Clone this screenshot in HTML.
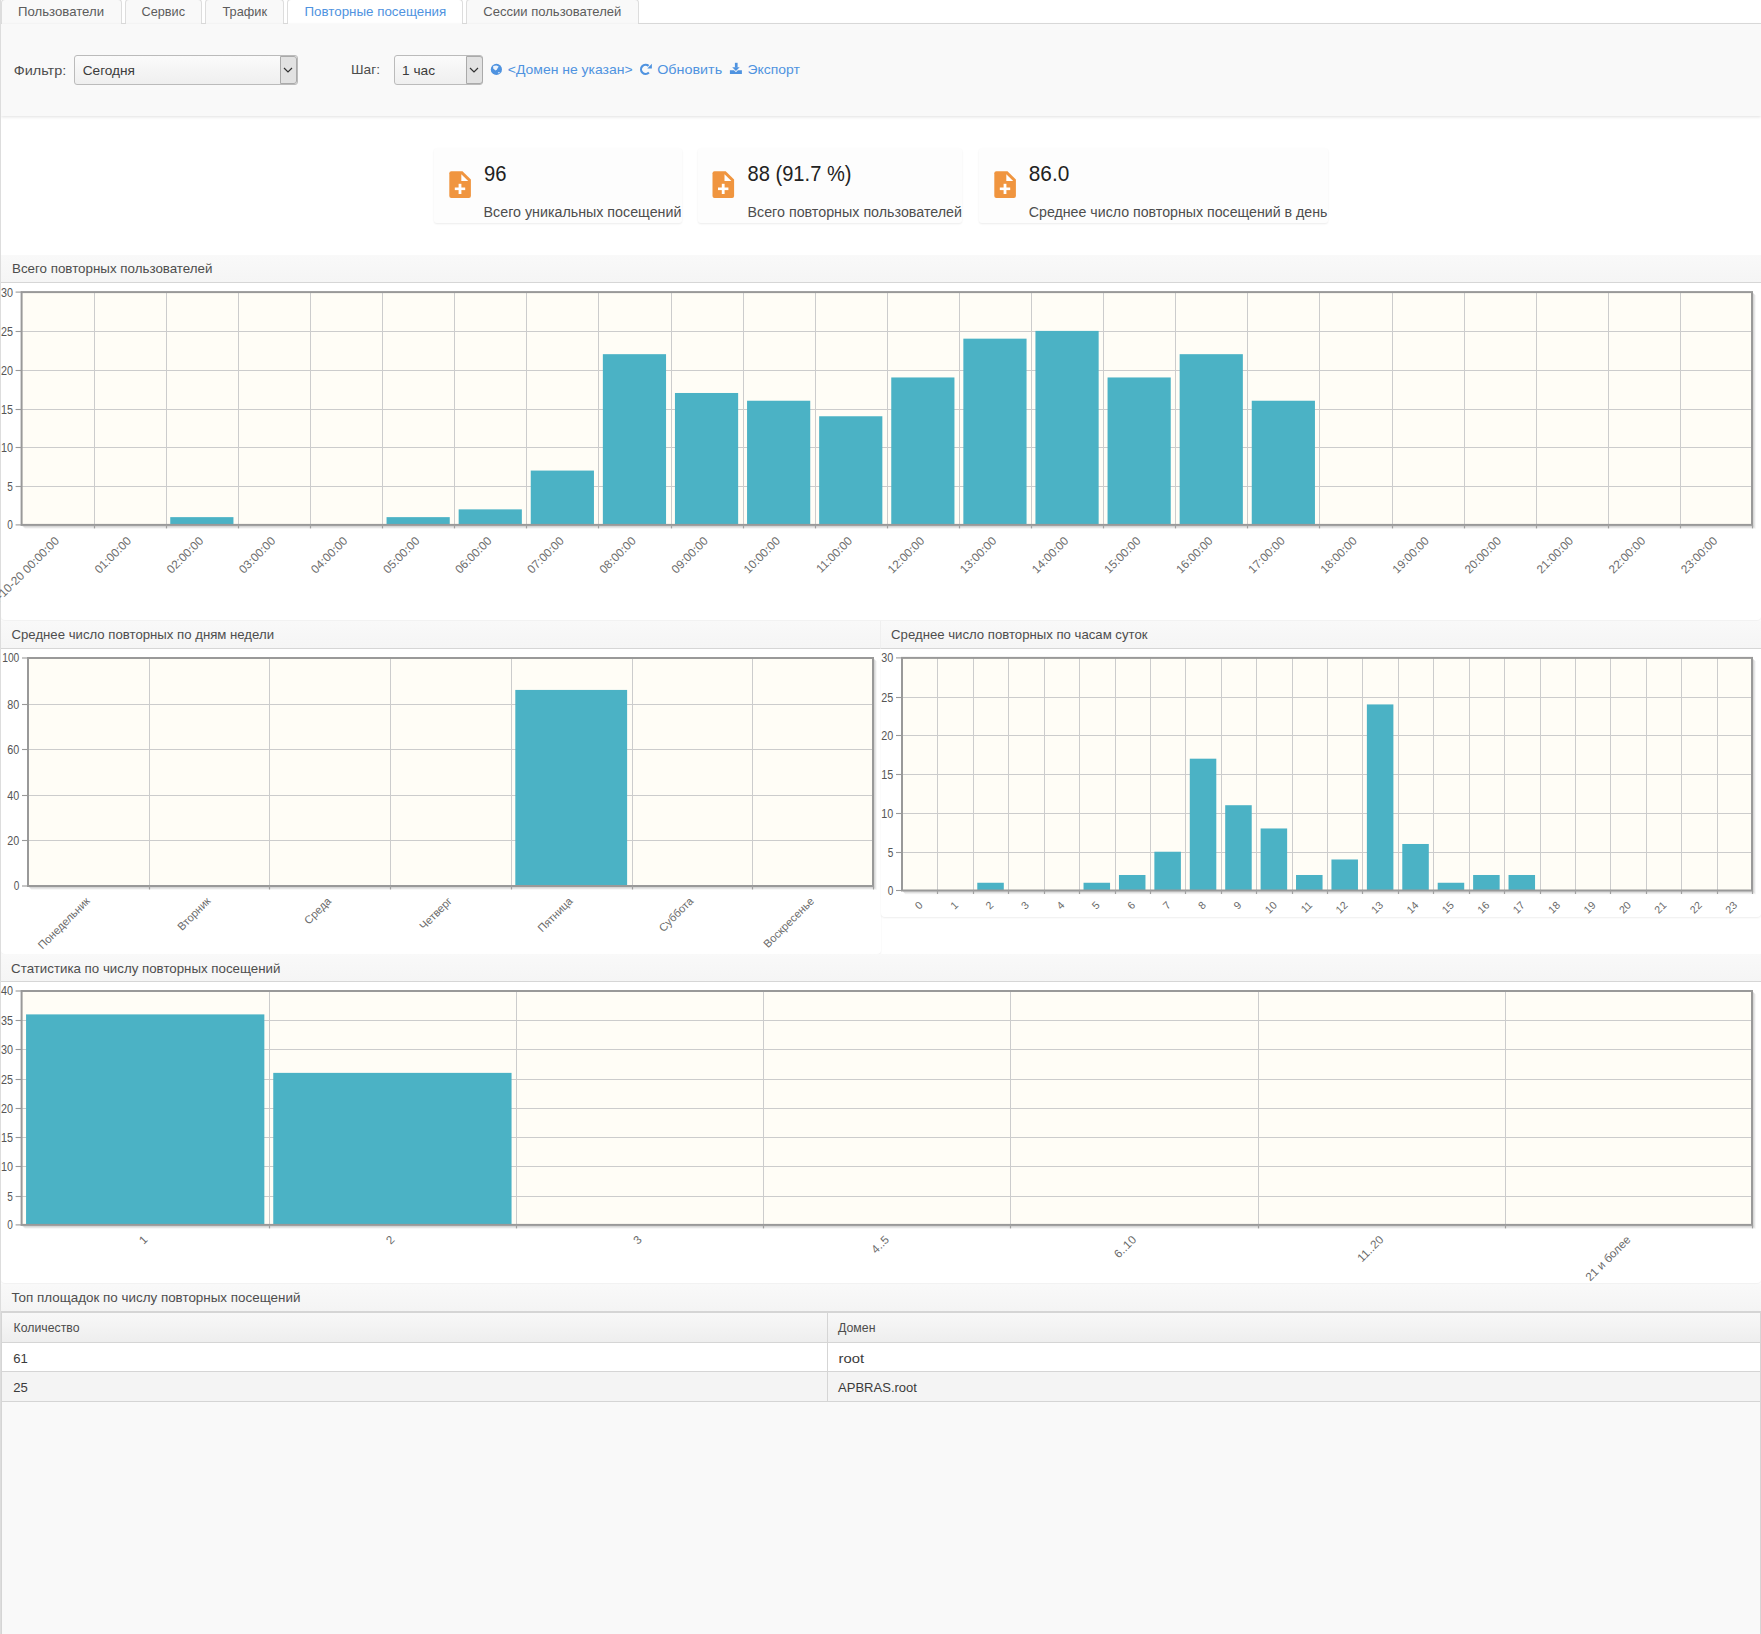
<!DOCTYPE html>
<html><head><meta charset="utf-8">
<style>
html,body{margin:0;padding:0;}
body{width:1761px;height:1634px;position:relative;overflow:hidden;background:#fff;font-family:"Liberation Sans", sans-serif;}
.a{position:absolute;box-sizing:border-box;}
</style></head><body>
<!-- page bg regions -->
<div class="a" style="left:0;top:0;width:1761px;height:23px;background:#fff"></div>
<div class="a" style="left:0;top:23px;width:1761px;height:1px;background:#dddddd"></div>
<!-- tabs -->
<div class="a" style="left:1px;top:-1px;width:121px;height:25px;background:#f9f9f9;border:1px solid #dddddd;border-radius:4px 4px 0 0;border-bottom:0"></div>
<div class="a" style="left:124.5px;top:-1px;width:77px;height:25px;background:#f9f9f9;border:1px solid #dddddd;border-radius:4px 4px 0 0;border-bottom:0"></div>
<div class="a" style="left:205px;top:-1px;width:79px;height:25px;background:#f9f9f9;border:1px solid #dddddd;border-radius:4px 4px 0 0;border-bottom:0"></div>
<div class="a" style="left:287px;top:-1px;width:176px;height:25px;background:#ffffff;border:1px solid #dddddd;border-radius:4px 4px 0 0;border-bottom:0"></div>
<div class="a" style="left:466px;top:-1px;width:173px;height:25px;background:#f9f9f9;border:1px solid #dddddd;border-radius:4px 4px 0 0;border-bottom:0"></div>
<!-- toolbar -->
<div class="a" style="left:1px;top:24px;width:1760px;height:92px;background:#f9f9f9;box-shadow:0 1px 3px rgba(0,0,0,.12)"></div>
<!-- selects -->
<div class="a" style="left:74px;top:55px;width:224px;height:30px;border:1px solid #bbbbbb;border-radius:3px;background:linear-gradient(#fbfbfb,#efefef)"></div>
<div class="a" style="left:280px;top:56px;width:17px;height:28px;border:1px solid #aaaaaa;border-radius:0 3px 3px 0;background:#e2e2e2"></div>
<div class="a" style="left:394px;top:55px;width:89px;height:30px;border:1px solid #bbbbbb;border-radius:3px;background:linear-gradient(#fbfbfb,#efefef)"></div>
<div class="a" style="left:466px;top:56px;width:17px;height:28px;border:1px solid #aaaaaa;border-radius:0 3px 3px 0;background:#e2e2e2"></div>
<!-- cards -->
<div class="a" style="left:434px;top:148px;width:248px;height:75px;background:#fdfdfd;border-radius:3px;box-shadow:0 1px 2px rgba(0,0,0,.08)"></div>
<div class="a" style="left:698px;top:148px;width:264px;height:75px;background:#fdfdfd;border-radius:3px;box-shadow:0 1px 2px rgba(0,0,0,.08)"></div>
<div class="a" style="left:979px;top:148px;width:349px;height:75px;background:#fdfdfd;border-radius:3px;box-shadow:0 1px 2px rgba(0,0,0,.08)"></div>
<!-- panels -->
<div class="a" style="left:1px;top:283px;width:1760px;height:337px;background:#fff;border-radius:0 0 4px 4px;box-shadow:0 1px 2px rgba(0,0,0,.07)"></div>
<div class="a" style="left:1px;top:649px;width:880px;height:305px;background:#fff;border-radius:0 0 4px 4px;box-shadow:0 1px 2px rgba(0,0,0,.07)"></div>
<div class="a" style="left:881px;top:649px;width:880px;height:268px;background:#fff;border-radius:0 0 4px 4px;box-shadow:0 1px 2px rgba(0,0,0,.07)"></div>
<div class="a" style="left:1px;top:982px;width:1760px;height:301px;background:#fff;border-radius:0 0 4px 4px;box-shadow:0 1px 2px rgba(0,0,0,.07)"></div>
<!-- headers -->
<div class="a" style="left:1px;top:255px;width:1760px;height:28px;background:linear-gradient(#f9f9f9,#f5f5f5);border-bottom:1px solid #d6d6d6"></div>
<div class="a" style="left:1px;top:621px;width:879px;height:28px;background:linear-gradient(#f9f9f9,#f5f5f5);border-bottom:1px solid #d6d6d6"></div>
<div class="a" style="left:880px;top:621px;width:881px;height:28px;background:linear-gradient(#f9f9f9,#f5f5f5);border-bottom:1px solid #d6d6d6;border-left:1px solid #efefef"></div>
<div class="a" style="left:1px;top:954px;width:1760px;height:28px;background:linear-gradient(#f9f9f9,#f5f5f5);border-bottom:1px solid #d6d6d6"></div>
<div class="a" style="left:1px;top:1284px;width:1760px;height:29px;background:linear-gradient(#f9f9f9,#f4f4f4);border-bottom:2px solid #d5d5d5"></div>
<!-- table -->
<div class="a" style="left:1px;top:1313px;width:1760px;height:321px;background:#f9f9f9;border-left:1px solid #d5d5d5;border-right:1px solid #d5d5d5"></div>
<div class="a" style="left:2px;top:1313px;width:1758px;height:30px;background:linear-gradient(#f8f8f8,#eeeeee);border-bottom:1px solid #d5d5d5"></div>
<div class="a" style="left:2px;top:1343px;width:1758px;height:29px;background:#ffffff;border-bottom:1px solid #d5d5d5"></div>
<div class="a" style="left:2px;top:1372px;width:1758px;height:30px;background:#f4f4f4;border-bottom:1px solid #d5d5d5"></div>
<div class="a" style="left:827px;top:1313px;width:1px;height:89px;background:#d5d5d5"></div>
<!-- page left border -->
<div class="a" style="left:0;top:0;width:1px;height:1634px;background:#dddddd"></div>
<!-- icons -->
<svg class="a" style="left:0;top:0" width="1761" height="1634" font-family='"Liberation Sans", sans-serif'>
<polyline points="284,68 288,72 292,68" fill="none" stroke="#333" stroke-width="1.2"/>
<polyline points="470,68 474,72 478,68" fill="none" stroke="#333" stroke-width="1.2"/>
<path d="M451.3,171.3 H462.5 L470.90000000000003,179.4 V196.10000000000002 Q470.90000000000003,198.10000000000002 468.90000000000003,198.10000000000002 H451.3 Q449.3,198.10000000000002 449.3,196.10000000000002 V173.3 Q449.3,171.3 451.3,171.3 Z" fill="#f0953f"/><path d="M461.3,174.20000000000002 V180.9 H468.2 Z" fill="#ffffff"/><rect x="458.6" y="183.8" width="2.8" height="10.2" fill="#fff"/><rect x="454.8" y="187.5" width="10.4" height="2.6" fill="#fff"/>
<path d="M714.5,171.3 H725.7 L734.1,179.4 V196.10000000000002 Q734.1,198.10000000000002 732.1,198.10000000000002 H714.5 Q712.5,198.10000000000002 712.5,196.10000000000002 V173.3 Q712.5,171.3 714.5,171.3 Z" fill="#f0953f"/><path d="M724.5,174.20000000000002 V180.9 H731.4 Z" fill="#ffffff"/><rect x="721.8" y="183.8" width="2.8" height="10.2" fill="#fff"/><rect x="718.0" y="187.5" width="10.4" height="2.6" fill="#fff"/>
<path d="M996.3,171.3 H1007.5 L1015.9,179.4 V196.10000000000002 Q1015.9,198.10000000000002 1013.9,198.10000000000002 H996.3 Q994.3,198.10000000000002 994.3,196.10000000000002 V173.3 Q994.3,171.3 996.3,171.3 Z" fill="#f0953f"/><path d="M1006.3,174.20000000000002 V180.9 H1013.1999999999999 Z" fill="#ffffff"/><rect x="1003.5999999999999" y="183.8" width="2.8" height="10.2" fill="#fff"/><rect x="999.8" y="187.5" width="10.4" height="2.6" fill="#fff"/>
<circle cx="496.4" cy="69.4" r="5.6" fill="#4f93e0"/><path d="M493.2,66.1 L496.4,65.4 L498.7,66.4 L497,69.3 L495.5,70.6 L493.2,68.4 Z" fill="#fff" opacity="0.9"/><ellipse cx="498.9" cy="72.7" rx="1" ry="0.6" fill="#fff" opacity="0.75"/>
<path d="M648.6,65.9 A4.57,4.57 0 1 0 648.9,72.6" fill="none" stroke="#4f93e0" stroke-width="2.2"/><path d="M647.3,68.4 L651.9,68.4 L651.9,63.8 Z" fill="#4f93e0"/>
<rect x="734.9" y="62.8" width="2.7" height="4.8" fill="#4f93e0"/><path d="M732.2,67.2 L739.7,67.2 L735.95,70.9 Z" fill="#4f93e0"/><path d="M729.9,70.2 H734 L735.95,72.2 L737.9,70.2 H741.9 V74 H729.9 Z" fill="#4f93e0"/>
<rect x="21.6" y="292.1" width="1730.4" height="232.79999999999995" fill="#fffdf6"/>
<line x1="21.6" y1="486.50" x2="1752" y2="486.50" stroke="#cccccc" stroke-width="1"/>
<line x1="21.6" y1="447.50" x2="1752" y2="447.50" stroke="#cccccc" stroke-width="1"/>
<line x1="21.6" y1="409.50" x2="1752" y2="409.50" stroke="#cccccc" stroke-width="1"/>
<line x1="21.6" y1="370.50" x2="1752" y2="370.50" stroke="#cccccc" stroke-width="1"/>
<line x1="21.6" y1="331.50" x2="1752" y2="331.50" stroke="#cccccc" stroke-width="1"/>
<line x1="94.50" y1="292.1" x2="94.50" y2="524.9" stroke="#cccccc" stroke-width="1"/>
<line x1="166.50" y1="292.1" x2="166.50" y2="524.9" stroke="#cccccc" stroke-width="1"/>
<line x1="238.50" y1="292.1" x2="238.50" y2="524.9" stroke="#cccccc" stroke-width="1"/>
<line x1="310.50" y1="292.1" x2="310.50" y2="524.9" stroke="#cccccc" stroke-width="1"/>
<line x1="382.50" y1="292.1" x2="382.50" y2="524.9" stroke="#cccccc" stroke-width="1"/>
<line x1="454.50" y1="292.1" x2="454.50" y2="524.9" stroke="#cccccc" stroke-width="1"/>
<line x1="526.50" y1="292.1" x2="526.50" y2="524.9" stroke="#cccccc" stroke-width="1"/>
<line x1="598.50" y1="292.1" x2="598.50" y2="524.9" stroke="#cccccc" stroke-width="1"/>
<line x1="671.50" y1="292.1" x2="671.50" y2="524.9" stroke="#cccccc" stroke-width="1"/>
<line x1="743.50" y1="292.1" x2="743.50" y2="524.9" stroke="#cccccc" stroke-width="1"/>
<line x1="815.50" y1="292.1" x2="815.50" y2="524.9" stroke="#cccccc" stroke-width="1"/>
<line x1="887.50" y1="292.1" x2="887.50" y2="524.9" stroke="#cccccc" stroke-width="1"/>
<line x1="959.50" y1="292.1" x2="959.50" y2="524.9" stroke="#cccccc" stroke-width="1"/>
<line x1="1031.50" y1="292.1" x2="1031.50" y2="524.9" stroke="#cccccc" stroke-width="1"/>
<line x1="1103.50" y1="292.1" x2="1103.50" y2="524.9" stroke="#cccccc" stroke-width="1"/>
<line x1="1175.50" y1="292.1" x2="1175.50" y2="524.9" stroke="#cccccc" stroke-width="1"/>
<line x1="1247.50" y1="292.1" x2="1247.50" y2="524.9" stroke="#cccccc" stroke-width="1"/>
<line x1="1319.50" y1="292.1" x2="1319.50" y2="524.9" stroke="#cccccc" stroke-width="1"/>
<line x1="1392.50" y1="292.1" x2="1392.50" y2="524.9" stroke="#cccccc" stroke-width="1"/>
<line x1="1464.50" y1="292.1" x2="1464.50" y2="524.9" stroke="#cccccc" stroke-width="1"/>
<line x1="1536.50" y1="292.1" x2="1536.50" y2="524.9" stroke="#cccccc" stroke-width="1"/>
<line x1="1608.50" y1="292.1" x2="1608.50" y2="524.9" stroke="#cccccc" stroke-width="1"/>
<line x1="1680.50" y1="292.1" x2="1680.50" y2="524.9" stroke="#cccccc" stroke-width="1"/>
<rect x="170.25" y="517.14" width="63.20" height="7.76" fill="#4bb2c5"/>
<rect x="386.55" y="517.14" width="63.20" height="7.76" fill="#4bb2c5"/>
<rect x="458.65" y="509.38" width="63.20" height="15.52" fill="#4bb2c5"/>
<rect x="530.75" y="470.58" width="63.20" height="54.32" fill="#4bb2c5"/>
<rect x="602.85" y="354.18" width="63.20" height="170.72" fill="#4bb2c5"/>
<rect x="674.95" y="392.98" width="63.20" height="131.92" fill="#4bb2c5"/>
<rect x="747.05" y="400.74" width="63.20" height="124.16" fill="#4bb2c5"/>
<rect x="819.15" y="416.26" width="63.20" height="108.64" fill="#4bb2c5"/>
<rect x="891.25" y="377.46" width="63.20" height="147.44" fill="#4bb2c5"/>
<rect x="963.35" y="338.66" width="63.20" height="186.24" fill="#4bb2c5"/>
<rect x="1035.45" y="330.90" width="63.20" height="194.00" fill="#4bb2c5"/>
<rect x="1107.55" y="377.46" width="63.20" height="147.44" fill="#4bb2c5"/>
<rect x="1179.65" y="354.18" width="63.20" height="170.72" fill="#4bb2c5"/>
<rect x="1251.75" y="400.74" width="63.20" height="124.16" fill="#4bb2c5"/>
<polyline points="22.6,525.9 1753,525.9 1753,293.1" fill="none" stroke="rgba(0,0,0,0.13)" stroke-width="1.5"/>
<polyline points="23.6,526.9 1754,526.9 1754,294.1" fill="none" stroke="rgba(0,0,0,0.09)" stroke-width="1.5"/>
<polyline points="24.6,527.9 1755,527.9 1755,295.1" fill="none" stroke="rgba(0,0,0,0.045)" stroke-width="1.5"/>
<rect x="21.6" y="292.1" width="1730.4" height="232.79999999999995" fill="none" stroke="#999999" stroke-width="2"/>
<line x1="15.600000000000001" y1="524.90" x2="21.6" y2="524.90" stroke="#999999" stroke-width="1.1"/>
<text x="12.90" y="529.30" font-size="12" fill="#555" text-anchor="end" textLength="5.6" lengthAdjust="spacingAndGlyphs">0</text>
<line x1="15.600000000000001" y1="486.50" x2="21.6" y2="486.50" stroke="#999999" stroke-width="1.1"/>
<text x="12.90" y="490.90" font-size="12" fill="#555" text-anchor="end" textLength="5.6" lengthAdjust="spacingAndGlyphs">5</text>
<line x1="15.600000000000001" y1="447.50" x2="21.6" y2="447.50" stroke="#999999" stroke-width="1.1"/>
<text x="12.90" y="451.90" font-size="12" fill="#555" text-anchor="end" textLength="12.0" lengthAdjust="spacingAndGlyphs">10</text>
<line x1="15.600000000000001" y1="409.50" x2="21.6" y2="409.50" stroke="#999999" stroke-width="1.1"/>
<text x="12.90" y="413.90" font-size="12" fill="#555" text-anchor="end" textLength="12.0" lengthAdjust="spacingAndGlyphs">15</text>
<line x1="15.600000000000001" y1="370.50" x2="21.6" y2="370.50" stroke="#999999" stroke-width="1.1"/>
<text x="12.90" y="374.90" font-size="12" fill="#555" text-anchor="end" textLength="12.0" lengthAdjust="spacingAndGlyphs">20</text>
<line x1="15.600000000000001" y1="331.50" x2="21.6" y2="331.50" stroke="#999999" stroke-width="1.1"/>
<text x="12.90" y="335.90" font-size="12" fill="#555" text-anchor="end" textLength="12.0" lengthAdjust="spacingAndGlyphs">25</text>
<line x1="15.600000000000001" y1="292.10" x2="21.6" y2="292.10" stroke="#999999" stroke-width="1.1"/>
<text x="12.90" y="296.50" font-size="12" fill="#555" text-anchor="end" textLength="12.0" lengthAdjust="spacingAndGlyphs">30</text>
<line x1="94.50" y1="524.9" x2="94.50" y2="528.4" stroke="#a0a0a0" stroke-width="1.2"/>
<line x1="166.50" y1="524.9" x2="166.50" y2="528.4" stroke="#a0a0a0" stroke-width="1.2"/>
<line x1="238.50" y1="524.9" x2="238.50" y2="528.4" stroke="#a0a0a0" stroke-width="1.2"/>
<line x1="310.50" y1="524.9" x2="310.50" y2="528.4" stroke="#a0a0a0" stroke-width="1.2"/>
<line x1="382.50" y1="524.9" x2="382.50" y2="528.4" stroke="#a0a0a0" stroke-width="1.2"/>
<line x1="454.50" y1="524.9" x2="454.50" y2="528.4" stroke="#a0a0a0" stroke-width="1.2"/>
<line x1="526.50" y1="524.9" x2="526.50" y2="528.4" stroke="#a0a0a0" stroke-width="1.2"/>
<line x1="598.50" y1="524.9" x2="598.50" y2="528.4" stroke="#a0a0a0" stroke-width="1.2"/>
<line x1="671.50" y1="524.9" x2="671.50" y2="528.4" stroke="#a0a0a0" stroke-width="1.2"/>
<line x1="743.50" y1="524.9" x2="743.50" y2="528.4" stroke="#a0a0a0" stroke-width="1.2"/>
<line x1="815.50" y1="524.9" x2="815.50" y2="528.4" stroke="#a0a0a0" stroke-width="1.2"/>
<line x1="887.50" y1="524.9" x2="887.50" y2="528.4" stroke="#a0a0a0" stroke-width="1.2"/>
<line x1="959.50" y1="524.9" x2="959.50" y2="528.4" stroke="#a0a0a0" stroke-width="1.2"/>
<line x1="1031.50" y1="524.9" x2="1031.50" y2="528.4" stroke="#a0a0a0" stroke-width="1.2"/>
<line x1="1103.50" y1="524.9" x2="1103.50" y2="528.4" stroke="#a0a0a0" stroke-width="1.2"/>
<line x1="1175.50" y1="524.9" x2="1175.50" y2="528.4" stroke="#a0a0a0" stroke-width="1.2"/>
<line x1="1247.50" y1="524.9" x2="1247.50" y2="528.4" stroke="#a0a0a0" stroke-width="1.2"/>
<line x1="1319.50" y1="524.9" x2="1319.50" y2="528.4" stroke="#a0a0a0" stroke-width="1.2"/>
<line x1="1392.50" y1="524.9" x2="1392.50" y2="528.4" stroke="#a0a0a0" stroke-width="1.2"/>
<line x1="1464.50" y1="524.9" x2="1464.50" y2="528.4" stroke="#a0a0a0" stroke-width="1.2"/>
<line x1="1536.50" y1="524.9" x2="1536.50" y2="528.4" stroke="#a0a0a0" stroke-width="1.2"/>
<line x1="1608.50" y1="524.9" x2="1608.50" y2="528.4" stroke="#a0a0a0" stroke-width="1.2"/>
<line x1="1680.50" y1="524.9" x2="1680.50" y2="528.4" stroke="#a0a0a0" stroke-width="1.2"/>
<line x1="1752.50" y1="524.9" x2="1752.50" y2="528.4" stroke="#a0a0a0" stroke-width="1.2"/>
<text transform="translate(59.85,541.70) rotate(-45)" font-size="11.8" fill="#6a6a6a" text-anchor="end">2014-10-20 00:00:00</text>
<text transform="translate(131.95,541.70) rotate(-45)" font-size="11.8" fill="#6a6a6a" text-anchor="end">01:00:00</text>
<text transform="translate(204.05,541.70) rotate(-45)" font-size="11.8" fill="#6a6a6a" text-anchor="end">02:00:00</text>
<text transform="translate(276.15,541.70) rotate(-45)" font-size="11.8" fill="#6a6a6a" text-anchor="end">03:00:00</text>
<text transform="translate(348.25,541.70) rotate(-45)" font-size="11.8" fill="#6a6a6a" text-anchor="end">04:00:00</text>
<text transform="translate(420.35,541.70) rotate(-45)" font-size="11.8" fill="#6a6a6a" text-anchor="end">05:00:00</text>
<text transform="translate(492.45,541.70) rotate(-45)" font-size="11.8" fill="#6a6a6a" text-anchor="end">06:00:00</text>
<text transform="translate(564.55,541.70) rotate(-45)" font-size="11.8" fill="#6a6a6a" text-anchor="end">07:00:00</text>
<text transform="translate(636.65,541.70) rotate(-45)" font-size="11.8" fill="#6a6a6a" text-anchor="end">08:00:00</text>
<text transform="translate(708.75,541.70) rotate(-45)" font-size="11.8" fill="#6a6a6a" text-anchor="end">09:00:00</text>
<text transform="translate(780.85,541.70) rotate(-45)" font-size="11.8" fill="#6a6a6a" text-anchor="end">10:00:00</text>
<text transform="translate(852.95,541.70) rotate(-45)" font-size="11.8" fill="#6a6a6a" text-anchor="end">11:00:00</text>
<text transform="translate(925.05,541.70) rotate(-45)" font-size="11.8" fill="#6a6a6a" text-anchor="end">12:00:00</text>
<text transform="translate(997.15,541.70) rotate(-45)" font-size="11.8" fill="#6a6a6a" text-anchor="end">13:00:00</text>
<text transform="translate(1069.25,541.70) rotate(-45)" font-size="11.8" fill="#6a6a6a" text-anchor="end">14:00:00</text>
<text transform="translate(1141.35,541.70) rotate(-45)" font-size="11.8" fill="#6a6a6a" text-anchor="end">15:00:00</text>
<text transform="translate(1213.45,541.70) rotate(-45)" font-size="11.8" fill="#6a6a6a" text-anchor="end">16:00:00</text>
<text transform="translate(1285.55,541.70) rotate(-45)" font-size="11.8" fill="#6a6a6a" text-anchor="end">17:00:00</text>
<text transform="translate(1357.65,541.70) rotate(-45)" font-size="11.8" fill="#6a6a6a" text-anchor="end">18:00:00</text>
<text transform="translate(1429.75,541.70) rotate(-45)" font-size="11.8" fill="#6a6a6a" text-anchor="end">19:00:00</text>
<text transform="translate(1501.85,541.70) rotate(-45)" font-size="11.8" fill="#6a6a6a" text-anchor="end">20:00:00</text>
<text transform="translate(1573.95,541.70) rotate(-45)" font-size="11.8" fill="#6a6a6a" text-anchor="end">21:00:00</text>
<text transform="translate(1646.05,541.70) rotate(-45)" font-size="11.8" fill="#6a6a6a" text-anchor="end">22:00:00</text>
<text transform="translate(1718.15,541.70) rotate(-45)" font-size="11.8" fill="#6a6a6a" text-anchor="end">23:00:00</text>
<rect x="28" y="658" width="845" height="228" fill="#fffdf6"/>
<line x1="28" y1="840.50" x2="873" y2="840.50" stroke="#cccccc" stroke-width="1"/>
<line x1="28" y1="795.50" x2="873" y2="795.50" stroke="#cccccc" stroke-width="1"/>
<line x1="28" y1="749.50" x2="873" y2="749.50" stroke="#cccccc" stroke-width="1"/>
<line x1="28" y1="704.50" x2="873" y2="704.50" stroke="#cccccc" stroke-width="1"/>
<line x1="149.50" y1="658" x2="149.50" y2="886" stroke="#cccccc" stroke-width="1"/>
<line x1="269.50" y1="658" x2="269.50" y2="886" stroke="#cccccc" stroke-width="1"/>
<line x1="390.50" y1="658" x2="390.50" y2="886" stroke="#cccccc" stroke-width="1"/>
<line x1="511.50" y1="658" x2="511.50" y2="886" stroke="#cccccc" stroke-width="1"/>
<line x1="632.50" y1="658" x2="632.50" y2="886" stroke="#cccccc" stroke-width="1"/>
<line x1="752.50" y1="658" x2="752.50" y2="886" stroke="#cccccc" stroke-width="1"/>
<rect x="515.31" y="689.92" width="111.81" height="196.08" fill="#4bb2c5"/>
<polyline points="29,887 874,887 874,659" fill="none" stroke="rgba(0,0,0,0.13)" stroke-width="1.5"/>
<polyline points="30,888 875,888 875,660" fill="none" stroke="rgba(0,0,0,0.09)" stroke-width="1.5"/>
<polyline points="31,889 876,889 876,661" fill="none" stroke="rgba(0,0,0,0.045)" stroke-width="1.5"/>
<rect x="28" y="658" width="845" height="228" fill="none" stroke="#999999" stroke-width="2"/>
<line x1="22" y1="886.00" x2="28" y2="886.00" stroke="#999999" stroke-width="1.1"/>
<text x="19.30" y="890.40" font-size="12" fill="#555" text-anchor="end" textLength="5.6" lengthAdjust="spacingAndGlyphs">0</text>
<line x1="22" y1="840.50" x2="28" y2="840.50" stroke="#999999" stroke-width="1.1"/>
<text x="19.30" y="844.90" font-size="12" fill="#555" text-anchor="end" textLength="12.0" lengthAdjust="spacingAndGlyphs">20</text>
<line x1="22" y1="795.50" x2="28" y2="795.50" stroke="#999999" stroke-width="1.1"/>
<text x="19.30" y="799.90" font-size="12" fill="#555" text-anchor="end" textLength="12.0" lengthAdjust="spacingAndGlyphs">40</text>
<line x1="22" y1="749.50" x2="28" y2="749.50" stroke="#999999" stroke-width="1.1"/>
<text x="19.30" y="753.90" font-size="12" fill="#555" text-anchor="end" textLength="12.0" lengthAdjust="spacingAndGlyphs">60</text>
<line x1="22" y1="704.50" x2="28" y2="704.50" stroke="#999999" stroke-width="1.1"/>
<text x="19.30" y="708.90" font-size="12" fill="#555" text-anchor="end" textLength="12.0" lengthAdjust="spacingAndGlyphs">80</text>
<line x1="22" y1="658.00" x2="28" y2="658.00" stroke="#999999" stroke-width="1.1"/>
<text x="19.30" y="662.40" font-size="12" fill="#555" text-anchor="end" textLength="17.1" lengthAdjust="spacingAndGlyphs">100</text>
<line x1="149.50" y1="886" x2="149.50" y2="889.5" stroke="#a0a0a0" stroke-width="1.2"/>
<line x1="269.50" y1="886" x2="269.50" y2="889.5" stroke="#a0a0a0" stroke-width="1.2"/>
<line x1="390.50" y1="886" x2="390.50" y2="889.5" stroke="#a0a0a0" stroke-width="1.2"/>
<line x1="511.50" y1="886" x2="511.50" y2="889.5" stroke="#a0a0a0" stroke-width="1.2"/>
<line x1="632.50" y1="886" x2="632.50" y2="889.5" stroke="#a0a0a0" stroke-width="1.2"/>
<line x1="752.50" y1="886" x2="752.50" y2="889.5" stroke="#a0a0a0" stroke-width="1.2"/>
<line x1="873.50" y1="886" x2="873.50" y2="889.5" stroke="#a0a0a0" stroke-width="1.2"/>
<text transform="translate(90.56,901.80) rotate(-45)" font-size="11.1" fill="#6a6a6a" text-anchor="end">Понедельник</text>
<text transform="translate(211.27,901.80) rotate(-45)" font-size="11.1" fill="#6a6a6a" text-anchor="end">Вторник</text>
<text transform="translate(331.99,901.80) rotate(-45)" font-size="11.1" fill="#6a6a6a" text-anchor="end">Среда</text>
<text transform="translate(452.70,901.80) rotate(-45)" font-size="11.1" fill="#6a6a6a" text-anchor="end">Четверг</text>
<text transform="translate(573.41,901.80) rotate(-45)" font-size="11.1" fill="#6a6a6a" text-anchor="end">Пятница</text>
<text transform="translate(694.13,901.80) rotate(-45)" font-size="11.1" fill="#6a6a6a" text-anchor="end">Суббота</text>
<text transform="translate(814.84,901.80) rotate(-45)" font-size="11.1" fill="#6a6a6a" text-anchor="end">Воскресенье</text>
<rect x="902" y="657.9" width="850" height="232.60000000000002" fill="#fffdf6"/>
<line x1="902" y1="852.50" x2="1752" y2="852.50" stroke="#cccccc" stroke-width="1"/>
<line x1="902" y1="813.50" x2="1752" y2="813.50" stroke="#cccccc" stroke-width="1"/>
<line x1="902" y1="774.50" x2="1752" y2="774.50" stroke="#cccccc" stroke-width="1"/>
<line x1="902" y1="735.50" x2="1752" y2="735.50" stroke="#cccccc" stroke-width="1"/>
<line x1="902" y1="697.50" x2="1752" y2="697.50" stroke="#cccccc" stroke-width="1"/>
<line x1="937.50" y1="657.9" x2="937.50" y2="890.5" stroke="#cccccc" stroke-width="1"/>
<line x1="973.50" y1="657.9" x2="973.50" y2="890.5" stroke="#cccccc" stroke-width="1"/>
<line x1="1008.50" y1="657.9" x2="1008.50" y2="890.5" stroke="#cccccc" stroke-width="1"/>
<line x1="1044.50" y1="657.9" x2="1044.50" y2="890.5" stroke="#cccccc" stroke-width="1"/>
<line x1="1079.50" y1="657.9" x2="1079.50" y2="890.5" stroke="#cccccc" stroke-width="1"/>
<line x1="1115.50" y1="657.9" x2="1115.50" y2="890.5" stroke="#cccccc" stroke-width="1"/>
<line x1="1150.50" y1="657.9" x2="1150.50" y2="890.5" stroke="#cccccc" stroke-width="1"/>
<line x1="1185.50" y1="657.9" x2="1185.50" y2="890.5" stroke="#cccccc" stroke-width="1"/>
<line x1="1221.50" y1="657.9" x2="1221.50" y2="890.5" stroke="#cccccc" stroke-width="1"/>
<line x1="1256.50" y1="657.9" x2="1256.50" y2="890.5" stroke="#cccccc" stroke-width="1"/>
<line x1="1292.50" y1="657.9" x2="1292.50" y2="890.5" stroke="#cccccc" stroke-width="1"/>
<line x1="1327.50" y1="657.9" x2="1327.50" y2="890.5" stroke="#cccccc" stroke-width="1"/>
<line x1="1362.50" y1="657.9" x2="1362.50" y2="890.5" stroke="#cccccc" stroke-width="1"/>
<line x1="1398.50" y1="657.9" x2="1398.50" y2="890.5" stroke="#cccccc" stroke-width="1"/>
<line x1="1433.50" y1="657.9" x2="1433.50" y2="890.5" stroke="#cccccc" stroke-width="1"/>
<line x1="1469.50" y1="657.9" x2="1469.50" y2="890.5" stroke="#cccccc" stroke-width="1"/>
<line x1="1504.50" y1="657.9" x2="1504.50" y2="890.5" stroke="#cccccc" stroke-width="1"/>
<line x1="1540.50" y1="657.9" x2="1540.50" y2="890.5" stroke="#cccccc" stroke-width="1"/>
<line x1="1575.50" y1="657.9" x2="1575.50" y2="890.5" stroke="#cccccc" stroke-width="1"/>
<line x1="1610.50" y1="657.9" x2="1610.50" y2="890.5" stroke="#cccccc" stroke-width="1"/>
<line x1="1646.50" y1="657.9" x2="1646.50" y2="890.5" stroke="#cccccc" stroke-width="1"/>
<line x1="1681.50" y1="657.9" x2="1681.50" y2="890.5" stroke="#cccccc" stroke-width="1"/>
<line x1="1717.50" y1="657.9" x2="1717.50" y2="890.5" stroke="#cccccc" stroke-width="1"/>
<rect x="977.28" y="882.75" width="26.52" height="7.75" fill="#4bb2c5"/>
<rect x="1083.53" y="882.75" width="26.52" height="7.75" fill="#4bb2c5"/>
<rect x="1118.95" y="874.99" width="26.52" height="15.51" fill="#4bb2c5"/>
<rect x="1154.37" y="851.73" width="26.52" height="38.77" fill="#4bb2c5"/>
<rect x="1189.78" y="758.69" width="26.52" height="131.81" fill="#4bb2c5"/>
<rect x="1225.20" y="805.21" width="26.52" height="85.29" fill="#4bb2c5"/>
<rect x="1260.62" y="828.47" width="26.52" height="62.03" fill="#4bb2c5"/>
<rect x="1296.03" y="874.99" width="26.52" height="15.51" fill="#4bb2c5"/>
<rect x="1331.45" y="859.49" width="26.52" height="31.01" fill="#4bb2c5"/>
<rect x="1366.87" y="704.42" width="26.52" height="186.08" fill="#4bb2c5"/>
<rect x="1402.28" y="843.98" width="26.52" height="46.52" fill="#4bb2c5"/>
<rect x="1437.70" y="882.75" width="26.52" height="7.75" fill="#4bb2c5"/>
<rect x="1473.12" y="874.99" width="26.52" height="15.51" fill="#4bb2c5"/>
<rect x="1508.53" y="874.99" width="26.52" height="15.51" fill="#4bb2c5"/>
<polyline points="903,891.5 1753,891.5 1753,658.9" fill="none" stroke="rgba(0,0,0,0.13)" stroke-width="1.5"/>
<polyline points="904,892.5 1754,892.5 1754,659.9" fill="none" stroke="rgba(0,0,0,0.09)" stroke-width="1.5"/>
<polyline points="905,893.5 1755,893.5 1755,660.9" fill="none" stroke="rgba(0,0,0,0.045)" stroke-width="1.5"/>
<rect x="902" y="657.9" width="850" height="232.60000000000002" fill="none" stroke="#999999" stroke-width="2"/>
<line x1="896" y1="890.50" x2="902" y2="890.50" stroke="#999999" stroke-width="1.1"/>
<text x="893.30" y="894.90" font-size="12" fill="#555" text-anchor="end" textLength="5.6" lengthAdjust="spacingAndGlyphs">0</text>
<line x1="896" y1="852.50" x2="902" y2="852.50" stroke="#999999" stroke-width="1.1"/>
<text x="893.30" y="856.90" font-size="12" fill="#555" text-anchor="end" textLength="5.6" lengthAdjust="spacingAndGlyphs">5</text>
<line x1="896" y1="813.50" x2="902" y2="813.50" stroke="#999999" stroke-width="1.1"/>
<text x="893.30" y="817.90" font-size="12" fill="#555" text-anchor="end" textLength="12.0" lengthAdjust="spacingAndGlyphs">10</text>
<line x1="896" y1="774.50" x2="902" y2="774.50" stroke="#999999" stroke-width="1.1"/>
<text x="893.30" y="778.90" font-size="12" fill="#555" text-anchor="end" textLength="12.0" lengthAdjust="spacingAndGlyphs">15</text>
<line x1="896" y1="735.50" x2="902" y2="735.50" stroke="#999999" stroke-width="1.1"/>
<text x="893.30" y="739.90" font-size="12" fill="#555" text-anchor="end" textLength="12.0" lengthAdjust="spacingAndGlyphs">20</text>
<line x1="896" y1="697.50" x2="902" y2="697.50" stroke="#999999" stroke-width="1.1"/>
<text x="893.30" y="701.90" font-size="12" fill="#555" text-anchor="end" textLength="12.0" lengthAdjust="spacingAndGlyphs">25</text>
<line x1="896" y1="657.90" x2="902" y2="657.90" stroke="#999999" stroke-width="1.1"/>
<text x="893.30" y="662.30" font-size="12" fill="#555" text-anchor="end" textLength="12.0" lengthAdjust="spacingAndGlyphs">30</text>
<line x1="937.50" y1="890.5" x2="937.50" y2="894.0" stroke="#a0a0a0" stroke-width="1.2"/>
<line x1="973.50" y1="890.5" x2="973.50" y2="894.0" stroke="#a0a0a0" stroke-width="1.2"/>
<line x1="1008.50" y1="890.5" x2="1008.50" y2="894.0" stroke="#a0a0a0" stroke-width="1.2"/>
<line x1="1044.50" y1="890.5" x2="1044.50" y2="894.0" stroke="#a0a0a0" stroke-width="1.2"/>
<line x1="1079.50" y1="890.5" x2="1079.50" y2="894.0" stroke="#a0a0a0" stroke-width="1.2"/>
<line x1="1115.50" y1="890.5" x2="1115.50" y2="894.0" stroke="#a0a0a0" stroke-width="1.2"/>
<line x1="1150.50" y1="890.5" x2="1150.50" y2="894.0" stroke="#a0a0a0" stroke-width="1.2"/>
<line x1="1185.50" y1="890.5" x2="1185.50" y2="894.0" stroke="#a0a0a0" stroke-width="1.2"/>
<line x1="1221.50" y1="890.5" x2="1221.50" y2="894.0" stroke="#a0a0a0" stroke-width="1.2"/>
<line x1="1256.50" y1="890.5" x2="1256.50" y2="894.0" stroke="#a0a0a0" stroke-width="1.2"/>
<line x1="1292.50" y1="890.5" x2="1292.50" y2="894.0" stroke="#a0a0a0" stroke-width="1.2"/>
<line x1="1327.50" y1="890.5" x2="1327.50" y2="894.0" stroke="#a0a0a0" stroke-width="1.2"/>
<line x1="1362.50" y1="890.5" x2="1362.50" y2="894.0" stroke="#a0a0a0" stroke-width="1.2"/>
<line x1="1398.50" y1="890.5" x2="1398.50" y2="894.0" stroke="#a0a0a0" stroke-width="1.2"/>
<line x1="1433.50" y1="890.5" x2="1433.50" y2="894.0" stroke="#a0a0a0" stroke-width="1.2"/>
<line x1="1469.50" y1="890.5" x2="1469.50" y2="894.0" stroke="#a0a0a0" stroke-width="1.2"/>
<line x1="1504.50" y1="890.5" x2="1504.50" y2="894.0" stroke="#a0a0a0" stroke-width="1.2"/>
<line x1="1540.50" y1="890.5" x2="1540.50" y2="894.0" stroke="#a0a0a0" stroke-width="1.2"/>
<line x1="1575.50" y1="890.5" x2="1575.50" y2="894.0" stroke="#a0a0a0" stroke-width="1.2"/>
<line x1="1610.50" y1="890.5" x2="1610.50" y2="894.0" stroke="#a0a0a0" stroke-width="1.2"/>
<line x1="1646.50" y1="890.5" x2="1646.50" y2="894.0" stroke="#a0a0a0" stroke-width="1.2"/>
<line x1="1681.50" y1="890.5" x2="1681.50" y2="894.0" stroke="#a0a0a0" stroke-width="1.2"/>
<line x1="1717.50" y1="890.5" x2="1717.50" y2="894.0" stroke="#a0a0a0" stroke-width="1.2"/>
<line x1="1752.50" y1="890.5" x2="1752.50" y2="894.0" stroke="#a0a0a0" stroke-width="1.2"/>
<text transform="translate(923.41,905.80) rotate(-45)" font-size="10.6" fill="#6a6a6a" text-anchor="end">0</text>
<text transform="translate(958.83,905.80) rotate(-45)" font-size="10.6" fill="#6a6a6a" text-anchor="end">1</text>
<text transform="translate(994.24,905.80) rotate(-45)" font-size="10.6" fill="#6a6a6a" text-anchor="end">2</text>
<text transform="translate(1029.66,905.80) rotate(-45)" font-size="10.6" fill="#6a6a6a" text-anchor="end">3</text>
<text transform="translate(1065.08,905.80) rotate(-45)" font-size="10.6" fill="#6a6a6a" text-anchor="end">4</text>
<text transform="translate(1100.49,905.80) rotate(-45)" font-size="10.6" fill="#6a6a6a" text-anchor="end">5</text>
<text transform="translate(1135.91,905.80) rotate(-45)" font-size="10.6" fill="#6a6a6a" text-anchor="end">6</text>
<text transform="translate(1171.33,905.80) rotate(-45)" font-size="10.6" fill="#6a6a6a" text-anchor="end">7</text>
<text transform="translate(1206.74,905.80) rotate(-45)" font-size="10.6" fill="#6a6a6a" text-anchor="end">8</text>
<text transform="translate(1242.16,905.80) rotate(-45)" font-size="10.6" fill="#6a6a6a" text-anchor="end">9</text>
<text transform="translate(1277.58,905.80) rotate(-45)" font-size="10.6" fill="#6a6a6a" text-anchor="end">10</text>
<text transform="translate(1312.99,905.80) rotate(-45)" font-size="10.6" fill="#6a6a6a" text-anchor="end">11</text>
<text transform="translate(1348.41,905.80) rotate(-45)" font-size="10.6" fill="#6a6a6a" text-anchor="end">12</text>
<text transform="translate(1383.83,905.80) rotate(-45)" font-size="10.6" fill="#6a6a6a" text-anchor="end">13</text>
<text transform="translate(1419.24,905.80) rotate(-45)" font-size="10.6" fill="#6a6a6a" text-anchor="end">14</text>
<text transform="translate(1454.66,905.80) rotate(-45)" font-size="10.6" fill="#6a6a6a" text-anchor="end">15</text>
<text transform="translate(1490.08,905.80) rotate(-45)" font-size="10.6" fill="#6a6a6a" text-anchor="end">16</text>
<text transform="translate(1525.49,905.80) rotate(-45)" font-size="10.6" fill="#6a6a6a" text-anchor="end">17</text>
<text transform="translate(1560.91,905.80) rotate(-45)" font-size="10.6" fill="#6a6a6a" text-anchor="end">18</text>
<text transform="translate(1596.33,905.80) rotate(-45)" font-size="10.6" fill="#6a6a6a" text-anchor="end">19</text>
<text transform="translate(1631.74,905.80) rotate(-45)" font-size="10.6" fill="#6a6a6a" text-anchor="end">20</text>
<text transform="translate(1667.16,905.80) rotate(-45)" font-size="10.6" fill="#6a6a6a" text-anchor="end">21</text>
<text transform="translate(1702.58,905.80) rotate(-45)" font-size="10.6" fill="#6a6a6a" text-anchor="end">22</text>
<text transform="translate(1737.99,905.80) rotate(-45)" font-size="10.6" fill="#6a6a6a" text-anchor="end">23</text>
<rect x="21.6" y="991" width="1730.4" height="233.9000000000001" fill="#fffdf6"/>
<line x1="21.6" y1="1196.50" x2="1752" y2="1196.50" stroke="#cccccc" stroke-width="1"/>
<line x1="21.6" y1="1166.50" x2="1752" y2="1166.50" stroke="#cccccc" stroke-width="1"/>
<line x1="21.6" y1="1137.50" x2="1752" y2="1137.50" stroke="#cccccc" stroke-width="1"/>
<line x1="21.6" y1="1108.50" x2="1752" y2="1108.50" stroke="#cccccc" stroke-width="1"/>
<line x1="21.6" y1="1079.50" x2="1752" y2="1079.50" stroke="#cccccc" stroke-width="1"/>
<line x1="21.6" y1="1049.50" x2="1752" y2="1049.50" stroke="#cccccc" stroke-width="1"/>
<line x1="21.6" y1="1020.50" x2="1752" y2="1020.50" stroke="#cccccc" stroke-width="1"/>
<line x1="269.50" y1="991" x2="269.50" y2="1224.9" stroke="#cccccc" stroke-width="1"/>
<line x1="516.50" y1="991" x2="516.50" y2="1224.9" stroke="#cccccc" stroke-width="1"/>
<line x1="763.50" y1="991" x2="763.50" y2="1224.9" stroke="#cccccc" stroke-width="1"/>
<line x1="1010.50" y1="991" x2="1010.50" y2="1224.9" stroke="#cccccc" stroke-width="1"/>
<line x1="1258.50" y1="991" x2="1258.50" y2="1224.9" stroke="#cccccc" stroke-width="1"/>
<line x1="1505.50" y1="991" x2="1505.50" y2="1224.9" stroke="#cccccc" stroke-width="1"/>
<rect x="26.05" y="1014.39" width="238.30" height="210.51" fill="#4bb2c5"/>
<rect x="273.25" y="1072.87" width="238.30" height="152.04" fill="#4bb2c5"/>
<polyline points="22.6,1225.9 1753,1225.9 1753,992" fill="none" stroke="rgba(0,0,0,0.13)" stroke-width="1.5"/>
<polyline points="23.6,1226.9 1754,1226.9 1754,993" fill="none" stroke="rgba(0,0,0,0.09)" stroke-width="1.5"/>
<polyline points="24.6,1227.9 1755,1227.9 1755,994" fill="none" stroke="rgba(0,0,0,0.045)" stroke-width="1.5"/>
<rect x="21.6" y="991" width="1730.4" height="233.9000000000001" fill="none" stroke="#999999" stroke-width="2"/>
<line x1="15.600000000000001" y1="1224.90" x2="21.6" y2="1224.90" stroke="#999999" stroke-width="1.1"/>
<text x="12.90" y="1229.30" font-size="12" fill="#555" text-anchor="end" textLength="5.6" lengthAdjust="spacingAndGlyphs">0</text>
<line x1="15.600000000000001" y1="1196.50" x2="21.6" y2="1196.50" stroke="#999999" stroke-width="1.1"/>
<text x="12.90" y="1200.90" font-size="12" fill="#555" text-anchor="end" textLength="5.6" lengthAdjust="spacingAndGlyphs">5</text>
<line x1="15.600000000000001" y1="1166.50" x2="21.6" y2="1166.50" stroke="#999999" stroke-width="1.1"/>
<text x="12.90" y="1170.90" font-size="12" fill="#555" text-anchor="end" textLength="12.0" lengthAdjust="spacingAndGlyphs">10</text>
<line x1="15.600000000000001" y1="1137.50" x2="21.6" y2="1137.50" stroke="#999999" stroke-width="1.1"/>
<text x="12.90" y="1141.90" font-size="12" fill="#555" text-anchor="end" textLength="12.0" lengthAdjust="spacingAndGlyphs">15</text>
<line x1="15.600000000000001" y1="1108.50" x2="21.6" y2="1108.50" stroke="#999999" stroke-width="1.1"/>
<text x="12.90" y="1112.90" font-size="12" fill="#555" text-anchor="end" textLength="12.0" lengthAdjust="spacingAndGlyphs">20</text>
<line x1="15.600000000000001" y1="1079.50" x2="21.6" y2="1079.50" stroke="#999999" stroke-width="1.1"/>
<text x="12.90" y="1083.90" font-size="12" fill="#555" text-anchor="end" textLength="12.0" lengthAdjust="spacingAndGlyphs">25</text>
<line x1="15.600000000000001" y1="1049.50" x2="21.6" y2="1049.50" stroke="#999999" stroke-width="1.1"/>
<text x="12.90" y="1053.90" font-size="12" fill="#555" text-anchor="end" textLength="12.0" lengthAdjust="spacingAndGlyphs">30</text>
<line x1="15.600000000000001" y1="1020.50" x2="21.6" y2="1020.50" stroke="#999999" stroke-width="1.1"/>
<text x="12.90" y="1024.90" font-size="12" fill="#555" text-anchor="end" textLength="12.0" lengthAdjust="spacingAndGlyphs">35</text>
<line x1="15.600000000000001" y1="991.00" x2="21.6" y2="991.00" stroke="#999999" stroke-width="1.1"/>
<text x="12.90" y="995.40" font-size="12" fill="#555" text-anchor="end" textLength="12.0" lengthAdjust="spacingAndGlyphs">40</text>
<line x1="269.50" y1="1224.9" x2="269.50" y2="1228.4" stroke="#a0a0a0" stroke-width="1.2"/>
<line x1="516.50" y1="1224.9" x2="516.50" y2="1228.4" stroke="#a0a0a0" stroke-width="1.2"/>
<line x1="763.50" y1="1224.9" x2="763.50" y2="1228.4" stroke="#a0a0a0" stroke-width="1.2"/>
<line x1="1010.50" y1="1224.9" x2="1010.50" y2="1228.4" stroke="#a0a0a0" stroke-width="1.2"/>
<line x1="1258.50" y1="1224.9" x2="1258.50" y2="1228.4" stroke="#a0a0a0" stroke-width="1.2"/>
<line x1="1505.50" y1="1224.9" x2="1505.50" y2="1228.4" stroke="#a0a0a0" stroke-width="1.2"/>
<line x1="1752.50" y1="1224.9" x2="1752.50" y2="1228.4" stroke="#a0a0a0" stroke-width="1.2"/>
<text transform="translate(148.20,1240.50) rotate(-45)" font-size="11.6" fill="#6a6a6a" text-anchor="end">1</text>
<text transform="translate(395.40,1240.50) rotate(-45)" font-size="11.6" fill="#6a6a6a" text-anchor="end">2</text>
<text transform="translate(642.60,1240.50) rotate(-45)" font-size="11.6" fill="#6a6a6a" text-anchor="end">3</text>
<text transform="translate(889.80,1240.50) rotate(-45)" font-size="11.6" fill="#6a6a6a" text-anchor="end">4..5</text>
<text transform="translate(1137.00,1240.50) rotate(-45)" font-size="11.6" fill="#6a6a6a" text-anchor="end">6..10</text>
<text transform="translate(1384.20,1240.50) rotate(-45)" font-size="11.6" fill="#6a6a6a" text-anchor="end">11..20</text>
<text transform="translate(1631.40,1240.50) rotate(-45)" font-size="11.6" fill="#6a6a6a" text-anchor="end">21 и более</text>
<text x="18.00" y="16.00" font-size="13" fill="#5c5c5c" text-anchor="start" textLength="86.00" lengthAdjust="spacingAndGlyphs">Пользователи</text>
<text x="141.50" y="16.00" font-size="13" fill="#5c5c5c" text-anchor="start" textLength="43.50" lengthAdjust="spacingAndGlyphs">Сервис</text>
<text x="222.50" y="16.00" font-size="13" fill="#5c5c5c" text-anchor="start" textLength="44.50" lengthAdjust="spacingAndGlyphs">Трафик</text>
<text x="304.50" y="16.00" font-size="13" fill="#4f93e0" text-anchor="start" textLength="141.70" lengthAdjust="spacingAndGlyphs">Повторные посещения</text>
<text x="483.30" y="16.00" font-size="13" fill="#5c5c5c" text-anchor="start" textLength="138.00" lengthAdjust="spacingAndGlyphs">Сессии пользователей</text>
<text x="13.75" y="75.30" font-size="13" fill="#4d4d4d" text-anchor="start" textLength="52.50" lengthAdjust="spacingAndGlyphs">Фильтр:</text>
<text x="82.70" y="74.80" font-size="13" fill="#3b3b3b" text-anchor="start" textLength="52.30" lengthAdjust="spacingAndGlyphs">Сегодня</text>
<text x="351.00" y="73.60" font-size="13" fill="#4d4d4d" text-anchor="start" textLength="29.00" lengthAdjust="spacingAndGlyphs">Шаг:</text>
<text x="402.00" y="74.50" font-size="13" fill="#3b3b3b" text-anchor="start" textLength="33.00" lengthAdjust="spacingAndGlyphs">1 час</text>
<text x="507.80" y="73.60" font-size="13" fill="#4f93e0" text-anchor="start" textLength="124.80" lengthAdjust="spacingAndGlyphs">&lt;Домен не указан&gt;</text>
<text x="657.20" y="73.60" font-size="13" fill="#4f93e0" text-anchor="start" textLength="65.00" lengthAdjust="spacingAndGlyphs">Обновить</text>
<text x="747.60" y="73.60" font-size="13" fill="#4f93e0" text-anchor="start" textLength="52.20" lengthAdjust="spacingAndGlyphs">Экспорт</text>
<text x="483.90" y="181.10" font-size="22" fill="#222" text-anchor="start" textLength="22.50" lengthAdjust="spacingAndGlyphs">96</text>
<text x="747.50" y="181.10" font-size="22" fill="#222" text-anchor="start" textLength="104.00" lengthAdjust="spacingAndGlyphs">88 (91.7 %)</text>
<text x="1028.75" y="181.10" font-size="22" fill="#222" text-anchor="start" textLength="40.50" lengthAdjust="spacingAndGlyphs">86.0</text>
<text x="483.60" y="217.40" font-size="14" fill="#4d4d4d" text-anchor="start" textLength="197.80" lengthAdjust="spacingAndGlyphs">Всего уникальных посещений</text>
<text x="747.50" y="217.40" font-size="14" fill="#4d4d4d" text-anchor="start" textLength="214.50" lengthAdjust="spacingAndGlyphs">Всего повторных пользователей</text>
<text x="1028.75" y="217.40" font-size="14" fill="#4d4d4d" text-anchor="start" textLength="298.75" lengthAdjust="spacingAndGlyphs">Среднее число повторных посещений в день</text>
<text x="12.00" y="273.00" font-size="13" fill="#4d4d4d" text-anchor="start" textLength="200.50" lengthAdjust="spacingAndGlyphs">Всего повторных пользователей</text>
<text x="11.50" y="638.90" font-size="13" fill="#4d4d4d" text-anchor="start" textLength="262.50" lengthAdjust="spacingAndGlyphs">Среднее число повторных по дням недели</text>
<text x="891.10" y="638.90" font-size="13" fill="#4d4d4d" text-anchor="start" textLength="256.40" lengthAdjust="spacingAndGlyphs">Среднее число повторных по часам суток</text>
<text x="11.10" y="973.00" font-size="13" fill="#4d4d4d" text-anchor="start" textLength="269.30" lengthAdjust="spacingAndGlyphs">Статистика по числу повторных посещений</text>
<text x="11.40" y="1301.80" font-size="13" fill="#4d4d4d" text-anchor="start" textLength="289.00" lengthAdjust="spacingAndGlyphs">Топ площадок по числу повторных посещений</text>
<text x="13.60" y="1331.80" font-size="12" fill="#4d4d4d" text-anchor="start" textLength="65.90" lengthAdjust="spacingAndGlyphs">Количество</text>
<text x="838.00" y="1331.80" font-size="12" fill="#4d4d4d" text-anchor="start" textLength="37.50" lengthAdjust="spacingAndGlyphs">Домен</text>
<text x="13.30" y="1362.80" font-size="13" fill="#3b3b3b" text-anchor="start" textLength="14.60" lengthAdjust="spacingAndGlyphs">61</text>
<text x="838.50" y="1362.80" font-size="13" fill="#3b3b3b" text-anchor="start" textLength="25.50" lengthAdjust="spacingAndGlyphs">root</text>
<text x="13.30" y="1392.00" font-size="13" fill="#3b3b3b" text-anchor="start" textLength="14.60" lengthAdjust="spacingAndGlyphs">25</text>
<text x="838.00" y="1392.00" font-size="13" fill="#3b3b3b" text-anchor="start" textLength="79.00" lengthAdjust="spacingAndGlyphs">APBRAS.root</text>
</svg>
</body></html>
